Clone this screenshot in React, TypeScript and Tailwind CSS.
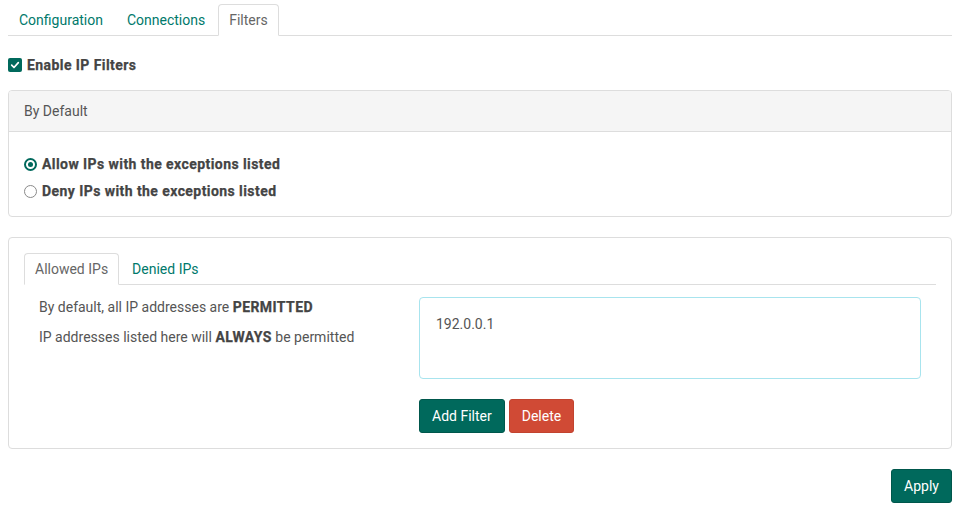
import React from "react";

const tabs = ["Configuration", "Connections", "Filters"];

function CheckBox() {
  return (
    <span className="flex h-[14px] w-[14px] items-center justify-center rounded-[2px] bg-[#00695c]">
      <svg viewBox="0 0 12 12" className="h-[10px] w-[10px]" fill="none">
        <path d="M2 6.2 4.8 9 10 3.2" stroke="#fff" strokeWidth="2" strokeLinecap="round" strokeLinejoin="round" />
      </svg>
    </span>
  );
}

function Radio({ checked }: { checked?: boolean }) {
  return (
    <span
      className={
        checked
          ? "flex h-[13px] w-[13px] items-center justify-center rounded-full border-2 border-[#00695c]"
          : "flex h-[13px] w-[13px] items-center justify-center rounded-full border-[1.5px] border-[#8a8a8a]"
      }
    >
      {checked && <span className="h-[5px] w-[5px] rounded-full bg-[#00695c]" />}
    </span>
  );
}

const heavy = "font-bold tracking-[0.43px] text-[#444] [-webkit-text-stroke:0.25px_#444]";

export default function App() {
  return (
    <div className="min-h-[509px] bg-white pl-2 pr-[6px] pt-[4px] text-[14px] leading-[20px] text-[#555] [font-family:Roboto,'Liberation_Sans',sans-serif]">
      {/* top tabs */}
      <ul className="flex border-b border-[#ddd]">
        {tabs.map((t) => (
          <li key={t} className="mr-[2px] -mb-px">
            {t === "Filters" ? (
              <span className="block rounded-t-[4px] border border-[#ddd] border-b-white bg-white px-[10px] py-[5px] text-[#666]">
                {t}
              </span>
            ) : (
              <span className="block border border-transparent px-[10px] py-[5px] text-[#00796b]">{t}</span>
            )}
          </li>
        ))}
      </ul>

      <label className={`mt-[19px] flex items-center gap-[5px] ${heavy}`}>
        <CheckBox />
        Enable IP Filters
      </label>

      {/* by default card */}
      <div className="mt-[15px] overflow-hidden rounded-[4px] border border-[#ddd]">
        <div className="flex h-[41px] items-center border-b border-[#ddd] bg-[#f5f5f5] px-[15px]">By Default</div>
        <div className={`flex flex-col gap-[7px] px-[15px] pt-[22px] pb-[15px] ${heavy}`}>
          <label className="flex items-center gap-[5px]">
            <Radio checked />
            Allow IPs with the exceptions listed
          </label>
          <label className="flex items-center gap-[5px]">
            <Radio />
            Deny IPs with the exceptions listed
          </label>
        </div>
      </div>

      {/* exceptions card */}
      <div className="mt-[20px] rounded-[4px] border border-[#ddd] p-[15px]">
        <ul className="flex border-b border-[#ddd]">
          <li className="mr-[2px] -mb-px">
            <span className="block rounded-t-[4px] border border-[#ddd] border-b-white bg-white px-[10px] py-[5px] text-[#666]">
              Allowed IPs
            </span>
          </li>
          <li className="-mb-px">
            <span className="block border border-transparent px-[10px] py-[5px] text-[#00796b]">Denied IPs</span>
          </li>
        </ul>

        <div className="grid grid-cols-[380px_1fr] pt-[12px]">
          <div className="px-[15px]">
            <p>
              By default, all IP addresses are <b className={heavy}>PERMITTED</b>
            </p>
            <p className="mt-[10px]">
              IP addresses listed here will <b className={heavy}>ALWAYS</b> be permitted
            </p>
          </div>
          <div className="px-[15px]">
            <div className="h-[82px] rounded-[4px] border border-[#a8e4ee] px-[16px] py-[16px] text-[#555]">192.0.0.1</div>
            <div className="mt-[20px] flex gap-[4px]">
              <button className="h-[34px] rounded-[3px] border border-[#00574c] bg-[#00695c] px-[12px] text-white">
                Add Filter
              </button>
              <button className="h-[34px] rounded-[3px] border border-[#c2432f] bg-[#d04a35] px-[12px] text-white">
                Delete
              </button>
            </div>
          </div>
        </div>
      </div>

      <div className="mt-[20px] flex justify-end">
        <button className="h-[34px] rounded-[3px] border border-[#00574c] bg-[#00695c] px-[12px] text-white">Apply</button>
      </div>
    </div>
  );
}
